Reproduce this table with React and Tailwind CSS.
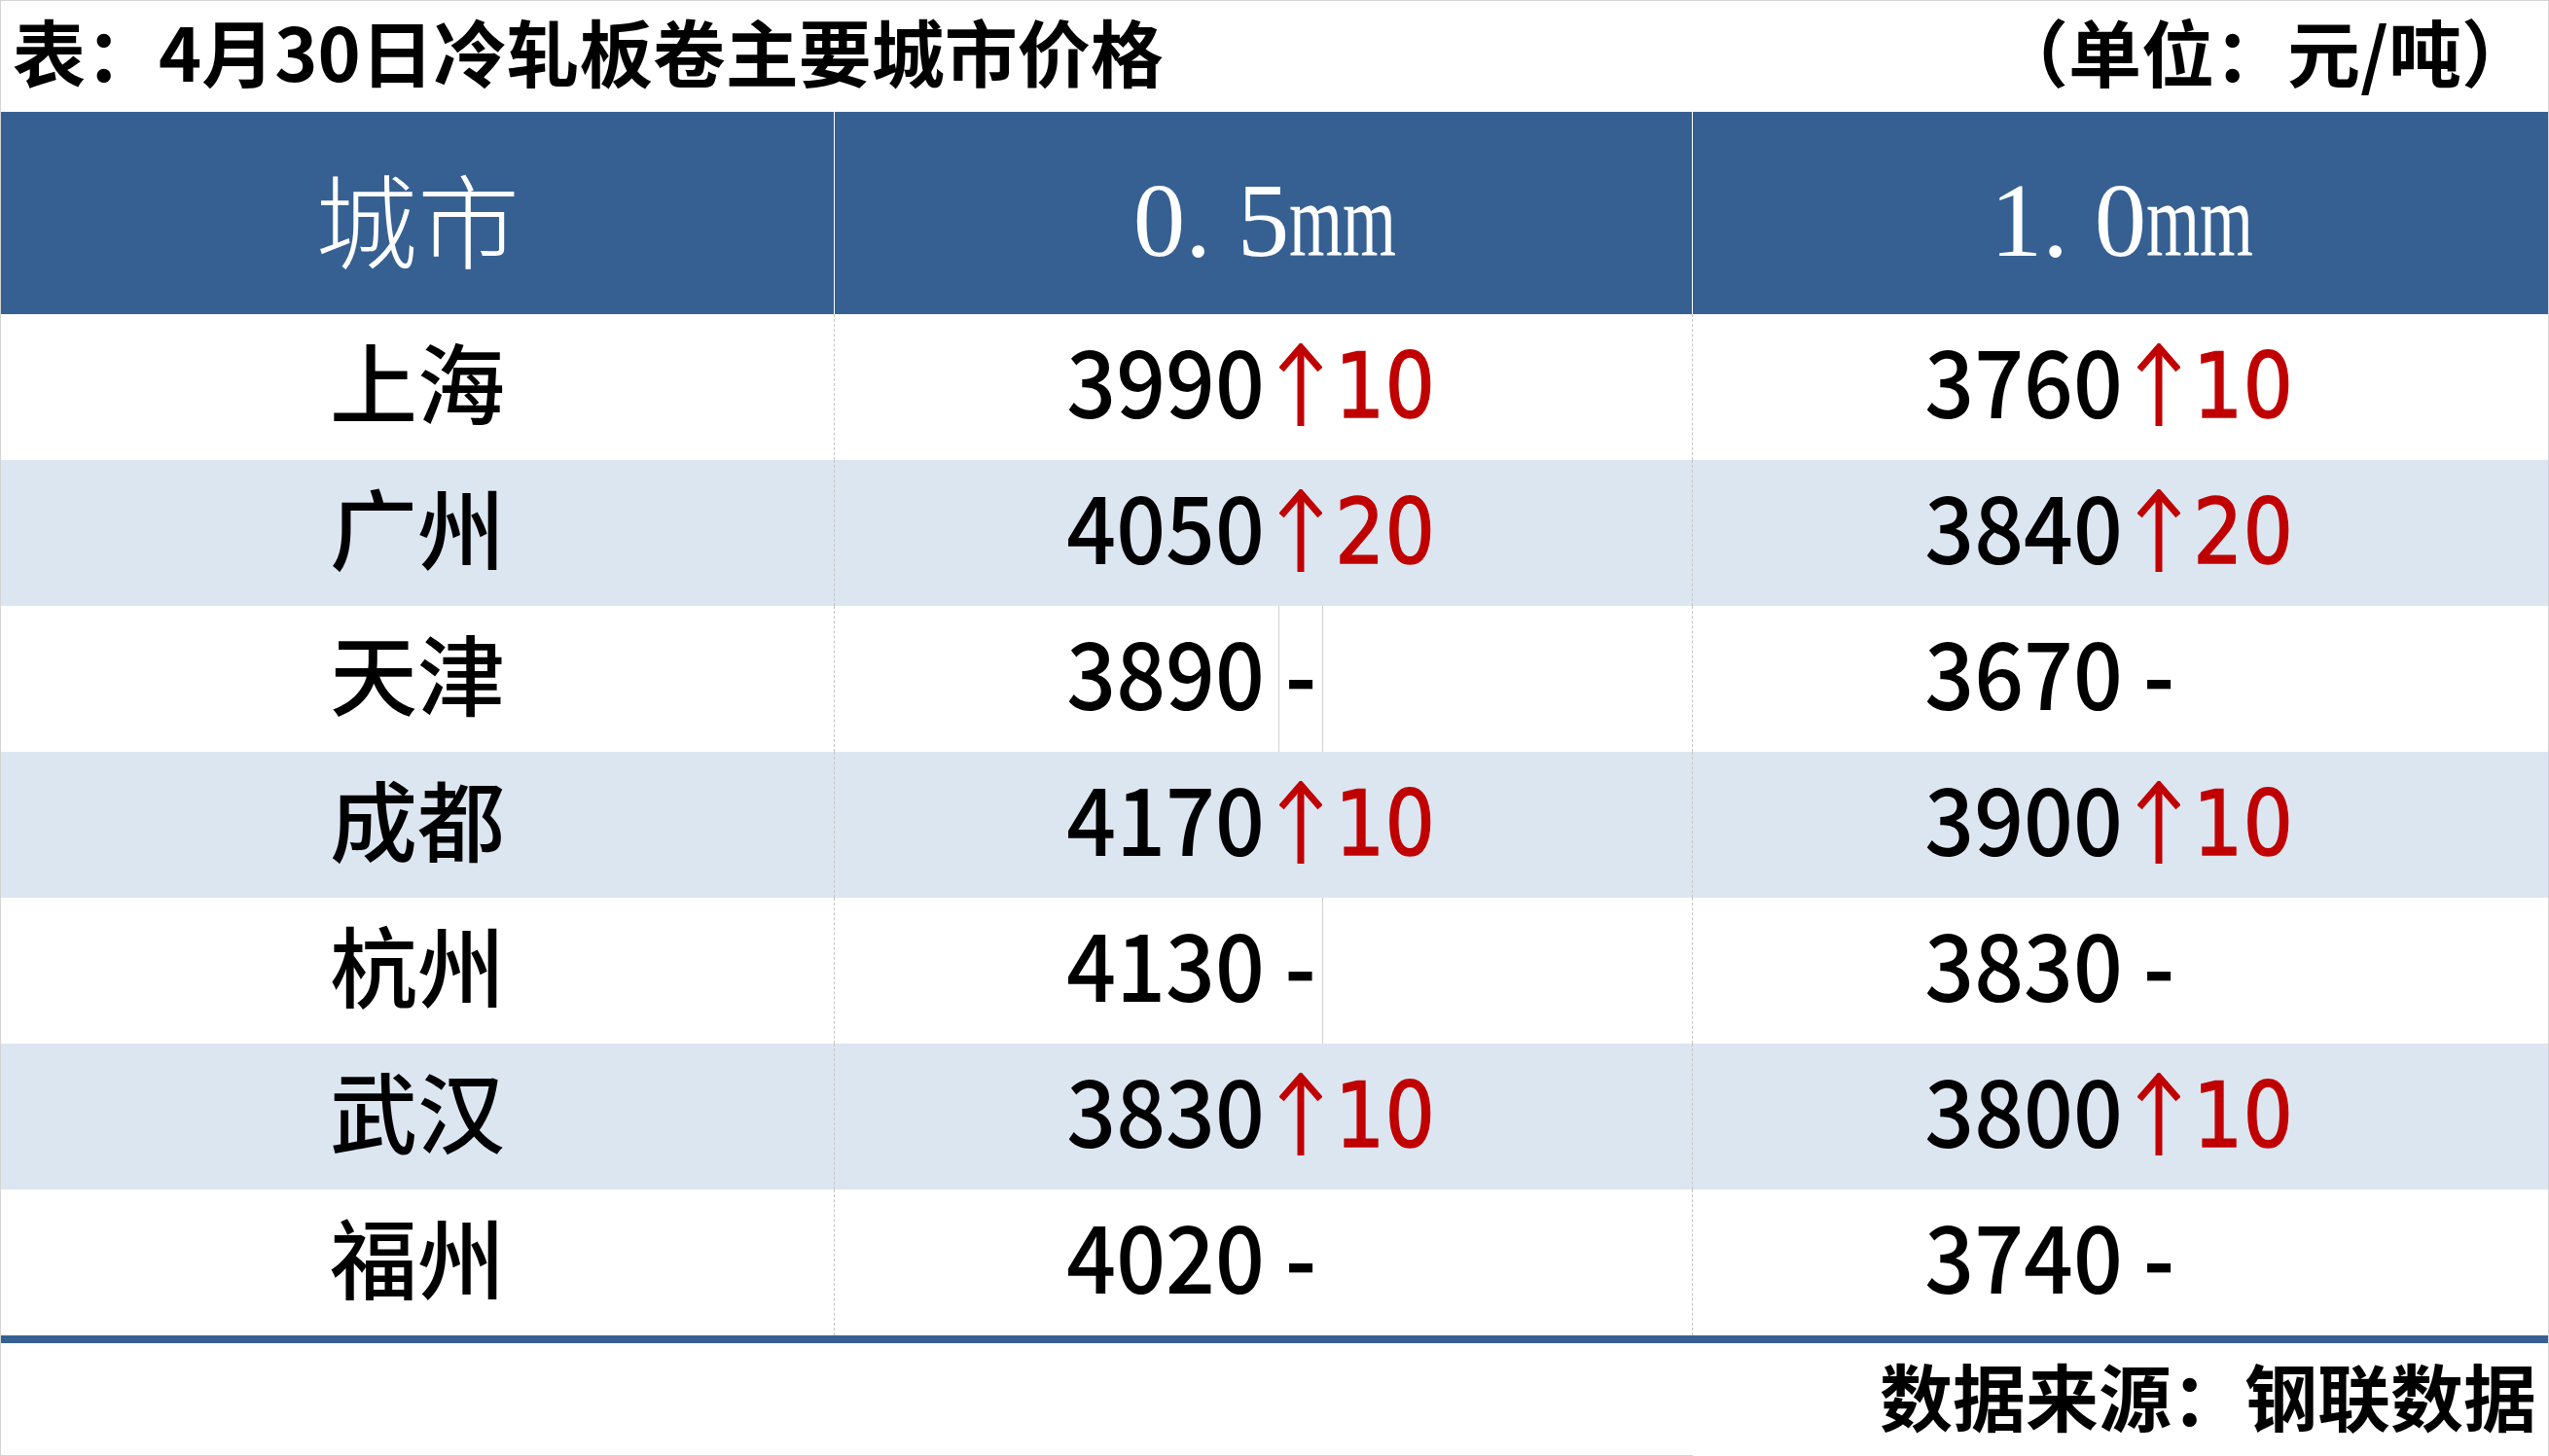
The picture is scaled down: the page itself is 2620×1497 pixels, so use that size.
import React from "react";

const rows = [
  ["上海", ["3990", "10"], ["3760", "10"]],
  ["广州", ["4050", "20"], ["3840", "20"]],
  ["天津", ["3890", null], ["3670", null]],
  ["成都", ["4170", "10"], ["3900", "10"]],
  ["杭州", ["4130", null], ["3830", null]],
  ["武汉", ["3830", "10"], ["3800", "10"]],
  ["福州", ["4020", null], ["3740", null]],
];

function UpArrow() {
  return (
    <svg width="44" height="85" viewBox="0 0 44 85" className="block">
      <line x1="22" y1="4" x2="22" y2="85" stroke="#c00000" strokeWidth="7" />
      <polyline points="2,27 22,4 42,27" fill="none" stroke="#c00000" strokeWidth="7" strokeLinejoin="miter" />
    </svg>
  );
}

function Mm({ a, b }) {
  return (
    <span className="inline-flex items-baseline whitespace-nowrap font-['Liberation_Serif',serif] text-[107px] leading-none mt-[17px]">
      <span>{a}</span>
      <span className="inline-block w-[0.5em]">.</span>
      <span>{b}</span>
      <span className="inline-block w-[1em]">
        <span className="inline-block origin-left scale-x-[0.66]">mm</span>
      </span>
    </span>
  );
}

function ValueCell({ value, change, lines }) {
  return (
    <div className="flex h-full border-l border-dashed border-[#c4c4c4]">
      <span className="self-center w-[442px] text-right leading-none mb-[18px]">
        <span className="inline-block origin-right scale-x-[0.93] text-[96px] font-medium">{value}</span>
      </span>
      <span
        className={
          "ml-[14px] w-[46px] self-stretch flex items-center justify-center " +
          (lines === "both"
            ? "border-l border-r border-[#d0d0d0]"
            : lines === "right"
            ? "border-r border-[#d0d0d0]"
            : "")
        }
      >
        {change ? (
          <span className="mb-[6px]">
            <UpArrow />
          </span>
        ) : (
          <span className="text-[88px] font-bold leading-none mb-[15px]">-</span>
        )}
      </span>
      {change && (
        <span className="self-center ml-[12px] leading-none">
          <span className="inline-block origin-left scale-x-[0.88] font-['DejaVu_Sans',sans-serif] text-[92px] text-[#c00000] [-webkit-text-stroke:1.5px_#c00000]">
            {change}
          </span>
        </span>
      )}
    </div>
  );
}

export default function App() {
  return (
    <div className="w-[2620px] h-[1497px] bg-white border-t border-l border-r border-[#d4d4d4] flex flex-col font-['Noto_Sans_CJK_SC',sans-serif] text-black">
      <div className="h-[114px] shrink-0 flex items-center justify-between pl-[12px] pr-[14px] text-[75px] font-bold leading-none">
        <span className="mb-[13px]">表：4月30日冷轧板卷主要城市价格</span>
        <span className="mb-[13px]">（单位：元/吨）</span>
      </div>
      <div className="h-[208px] shrink-0 bg-[#366092] grid grid-cols-[856px_882px_1fr] text-white">
        <div className="flex items-center justify-center">
          <span className="text-[105px] font-light leading-none mt-[7px]">城市</span>
        </div>
        <div className="flex items-center justify-center border-l border-white">
          <Mm a="0" b="5" />
        </div>
        <div className="flex items-center justify-center border-l border-white">
          <Mm a="1" b="0" />
        </div>
      </div>
      {rows.map(([city, v1, v2], i) => (
        <div
          key={city}
          className={
            "h-[150px] shrink-0 grid grid-cols-[856px_882px_1fr] " +
            (i % 2 === 1 ? "bg-[#dce6f1]" : "bg-white")
          }
        >
          <div className="flex items-center justify-center">
            <span className="text-[90px] font-medium leading-none mb-[16px]">{city}</span>
          </div>
          <ValueCell
            value={v1[0]}
            change={v1[1]}
            lines={i === 2 ? "both" : i === 4 ? "right" : ""}
          />
          <ValueCell value={v2[0]} change={v2[1]} lines="" />
        </div>
      ))}
      <div className="h-[8px] shrink-0 bg-[#366092]" />
      <div className="h-[115px] shrink-0 flex items-center justify-end pr-[12px] text-[75px] font-bold leading-none">
        <span className="mb-[10px]">数据来源：钢联数据</span>
      </div>
      <div className="h-px w-[1739px] shrink-0 bg-[#d4d4d4]" />
    </div>
  );
}
